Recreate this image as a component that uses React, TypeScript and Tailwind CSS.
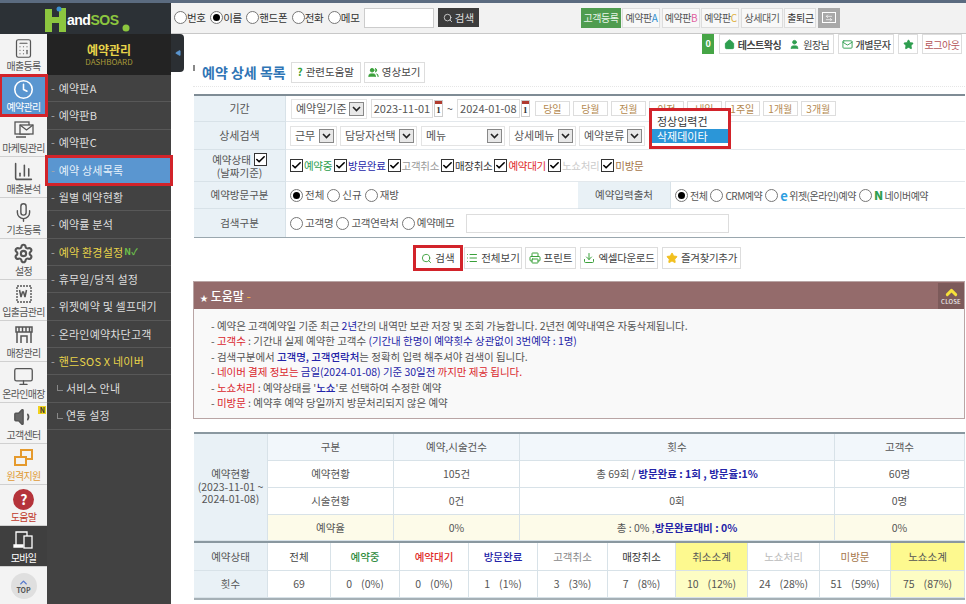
import React from "react";
import { Search, List, Printer, Download, Star, Users, House, User, Mail, Calculator, Clock, ChartColumn, Mic, Settings, Monitor, Volume1, Check, ChevronUp, Triangle, ArrowLeftRight } from "lucide-react";

const Radio = ({ on = false }: { on?: boolean }) => (
  <span className="inline-flex h-[13px] w-[13px] shrink-0 items-center justify-center rounded-full border border-[#777] bg-white">
    {on && <span className="h-[7px] w-[7px] rounded-full bg-black" />}
  </span>
);

const Box = () => (
  <span className="inline-flex h-[13px] w-[13px] shrink-0 items-center justify-center border border-[#333] bg-white">
    <Check size={11} strokeWidth={3.5} className="text-black" />
  </span>
);

const Sel = ({ text, w }: { text: string; w: string }) => (
  <span className={`${w} flex h-[20px] shrink-0 items-center justify-between whitespace-nowrap border border-[#e4e4e4] bg-white pl-[4px] pr-[2px] text-[11px]`}>
    <span>{text}</span>
    <span className="flex h-[14px] w-[15px] shrink-0 items-center justify-center border border-[#888] bg-[#e8e8e8]">
      <svg width="9" height="6" viewBox="0 0 9 6"><path d="M1 1l3.5 3.5L8 1" fill="none" stroke="#222" strokeWidth="1.6" /></svg>
    </span>
  </span>
);

const Cal = () => (
  <span className="flex h-[17px] w-[9px] shrink-0 flex-col border border-[#ccc] bg-white">
    <span className="h-[4px] bg-[#b03a2e]" />
    <span className="flex-1 text-center font-['Liberation_Serif',serif] text-[9px] font-bold leading-[12px] text-[#333]">1</span>
  </span>
);

const DateBtn = ({ t }: { t: string }) => (
  <span className="flex h-[15px] w-[35px] shrink-0 items-center justify-center border border-[#ddd] bg-white text-[10px] text-[#b4894f]">{t}</span>
);

const Btn = ({ children, cls = "" }: { children: React.ReactNode; cls?: string }) => (
  <span className={`flex shrink-0 items-center justify-center gap-[3px] whitespace-nowrap border border-[#ddd] bg-white ${cls}`}>{children}</span>
);

const railIcon = "text-[#555]";
const rail: { t: string; icon: React.ReactNode; cls?: string }[] = [
  { t: "매출등록", icon: <Calculator size={21} strokeWidth={1.4} className={railIcon} /> },
  { t: "예약관리", icon: <Clock size={21} strokeWidth={1.8} className="text-white" />, cls: "bg-[#5a96d0] text-white outline outline-[3px] -outline-offset-2 outline-[#d2232a]" },
  { t: "마케팅관리", icon: <svg width="22" height="20" viewBox="0 0 22 20" fill="none" stroke="#555" strokeWidth="1.3"><rect x="2" y="2" width="14" height="12" /><rect x="7" y="5" width="13" height="9" fill="#f3f3f3" /><path d="M7 5l6.500 5L20 5M3 17h10" /></svg> },
  { t: "매출분석", icon: <ChartColumn size={21} strokeWidth={1.8} className={railIcon} /> },
  { t: "기초등록", icon: <Mic size={21} strokeWidth={1.6} className={railIcon} /> },
  { t: "설정", icon: <Settings size={21} strokeWidth={2.4} className={railIcon} /> },
  { t: "입출금관리", icon: <svg width="20" height="20" viewBox="0 0 20 20" fill="none" stroke="#555" strokeWidth="1.4"><path d="M3 2h14v16H3z" strokeDasharray="2 1" /><path d="M5.500 6l1.500 7 1.500-5h1l1.500 5 1.500-7" strokeWidth="1.500" /></svg> },
  { t: "매장관리", icon: <svg width="20" height="20" viewBox="0 0 20 20" fill="none" stroke="#555" strokeWidth="1.500"><path d="M2 2h16v5H2zM5 2v5M8.500 2v5M12 2v5M15.500 2v5M3 7v11M17 7v11M7 18v-7h6v7" /></svg> },
  { t: "온라인매장", icon: <Monitor size={21} strokeWidth={1.5} className={railIcon} /> },
  { t: "고객센터", icon: <Volume1 size={22} strokeWidth={1.6} fill="#666" className={railIcon} /> },
  { t: "원격지원", cls: "text-[#e09a35]", icon: <svg width="21" height="21" viewBox="0 0 21 21" fill="none" stroke="#e59a2d" strokeWidth="2"><rect x="8" y="2" width="11" height="9" /><rect x="2" y="9" width="11" height="8" fill="#f3f3f3" /></svg> },
  { t: "도움말", cls: "text-[#c0392b]", icon: <span className="flex h-[21px] w-[21px] items-center justify-center rounded-full bg-[#b5333a] text-[14px] font-bold text-white">?</span> },
  { t: "모바일", cls: "bg-[#3f3f3f] text-white", icon: <svg width="21" height="20" viewBox="0 0 21 20" fill="none" stroke="#fff" strokeWidth="1.300"><path d="M3 15V2h11v4" /><rect x="11" y="6" width="8" height="12" /><path d="M1 15h9v2H1z" fill="#fff" /></svg> },
];

const menu: { t: string; cls?: string; sub?: boolean }[] = [
  { t: "예약판A" }, { t: "예약판B" }, { t: "예약판C" },
  { t: "예약 상세목록", cls: "active" },
  { t: "월별 예약현황" }, { t: "예약률 분석" },
  { t: "예약 환경설정", cls: "yellow" },
  { t: "휴무일/당직 설정" }, { t: "위젯예약 및 셀프대기" }, { t: "온라인예약차단고객" },
  { t: "핸드SOS X 네이버", cls: "yellow" },
  { t: "서비스 안내", sub: true }, { t: "연동 설정", sub: true },
];

const Label = ({ children, cls = "" }: { children: React.ReactNode; cls?: string }) => (
  <div className={`flex items-center justify-center border-b border-r border-[#d8e2e8] bg-[#e9f1f6] text-center ${cls}`}>{children}</div>
);

const SC = ({ children, cls = "" }: { children?: React.ReactNode; cls?: string }) => (
  <div className={`flex items-center justify-center border-b border-r border-[#d8e2e8] ${cls}`}>{children}</div>
);

const statusHead: [string, string][] = [
  ["전체", "text-[#444]"], ["예약중", "text-[#2e8b3d] font-medium"], ["예약대기", "text-[#e02b2b] font-medium"], ["방문완료", "text-[#2424a8] font-medium"],
  ["고객취소", "text-[#888]"], ["매장취소", "text-[#333]"], ["취소소계", "bg-[#fdf98f]"], ["노쇼처리", "text-[#bbb]"], ["미방문", "text-[#a5764a]"], ["노쇼소계", "bg-[#fdf98f]"],
];
const statusVal: [string, string, boolean][] = [
  ["69", "", false], ["0", "(0%)", false], ["00", "(0%)", false], ["1", "(1%)", false], ["3", "(3%)", false],
  ["7", "(8%)", false], ["10", "(12%)", true], ["24", "(28%)", false], ["51", "(59%)", false], ["75", "(87%)", true],
];

export default function App() {
  return (
    <div className="relative flex h-[604px] w-[966px] flex-col overflow-hidden bg-white font-['Noto_Sans_CJK_KR','Noto_Sans',sans-serif] text-[10.500px] text-[#555]">
      <div className="h-[3px] shrink-0 bg-[#5b6b80]" />
      <div className="flex min-h-0 flex-1">
        {/* left */}
        <aside className="flex w-[171px] shrink-0 flex-col">
          <div className="flex h-[31px] shrink-0 items-center bg-[#2c3136] pl-[45px]">
            <svg width="22" height="26" viewBox="0 0 22 26" className="shrink-0"><path d="M0 3h7v8h7V2h7v24h-7V17H7v9H0z" fill="#8cc63f" /><circle cx="14" cy="3" r="2.500" fill="#3b8fd0" /></svg>
            <span className="mt-[3px] font-['Liberation_Sans',sans-serif] text-[14px] font-bold leading-none tracking-[-0.5px] text-white">and</span>
            <span className="mt-[3px] font-['Liberation_Sans',sans-serif] text-[14px] font-bold leading-none tracking-[-0.4px] text-[#8cc63f]">SOS</span>
            <svg width="9" height="8" viewBox="0 0 9 8" className="ml-[2px] mt-[18px] shrink-0"><circle cx="5" cy="4" r="3.500" fill="#8cc63f" /></svg>
          </div>
          <div className="flex min-h-0 flex-1">
            <nav className="flex w-[47px] shrink-0 flex-col bg-[#f3f3f3]">
              {rail.map((r) => (
                <div key={r.t} className={`relative z-10 flex h-[41px] shrink-0 flex-col items-center justify-center overflow-visible whitespace-nowrap border-b border-[#d0d0d0] text-[10px] leading-[12px] tracking-[-0.7px] ${r.cls ?? "text-[#555]"}`}>
                  <span className="flex h-[24px] items-center">{r.icon}</span>
                  <span>{r.t}</span>
                  {r.t === "고객센터" && <span className="absolute right-[1px] top-[3px] flex h-[8px] w-[8px] items-center justify-center bg-[#f2d21c] text-[7px] font-bold leading-none text-[#333]">N</span>}
                </div>
              ))}
              <div className="flex flex-1 items-center justify-center">
                <div className="flex h-[26px] w-[26px] flex-col items-center justify-center rounded-full bg-[#dfdfdf] text-[7px] font-bold leading-[8px] text-[#555]">
                  <ChevronUp size={11} strokeWidth={3} className="-mb-[2px] text-[#5577cc]" />
                  TOP
                </div>
              </div>
            </nav>
            <div className="flex w-[124px] shrink-0 flex-col bg-[#424242]">
              <div className="flex h-[41px] shrink-0 flex-col items-center justify-center bg-[#232323]">
                <span className="text-[12px] font-bold leading-[15px] text-[#e8d44a]">예약관리</span>
                <span className="text-[8px] leading-[10px] text-[#a89a3a]">DASHBOARD</span>
              </div>
              {menu.map((m) => (
                <div
                  key={m.t}
                  className={`flex h-[27.3px] shrink-0 items-center whitespace-nowrap border-b border-[#585858] text-[11px] tracking-[0.2px] ${
                    m.cls === "active"
                      ? "relative z-10 bg-[#5a96d0] pl-[4px] text-[#e8f2fa] outline outline-[3px] -outline-offset-1 outline-[#d2232a]"
                      : m.cls === "yellow"
                        ? "pl-[4px] text-[#e8d44a]"
                        : m.sub
                          ? "pl-[10px] text-[#ddd]"
                          : "pl-[4px] text-[#ddd]"
                  }`}
                >
                  {m.sub ? <span className="mr-[3px] h-[6px] w-[6px] border-b border-l border-[#888]" /> : <span className="mr-[1px] text-[#aaa]">-&nbsp;</span>}
                  {m.t}
                  {m.t === "예약 환경설정" && <span className="ml-[1px] text-[9px] font-bold leading-none text-[#6cc04a]">N✓</span>}
                </div>
              ))}
            </div>
          </div>
        </aside>

        {/* main */}
        <main className="relative flex min-w-0 flex-1 flex-col">
          <div className="flex h-[31px] shrink-0 items-center border-b border-[#c8c8c8] bg-[#f2f2f2] pb-[1px] pl-[3px] text-[#333]">
            {["번호", "이름", "핸드폰", "전화", "메모"].map((t, i) => (
              <span key={t} className="mr-[4.400px] flex items-center whitespace-nowrap tracking-[-0.3px]">
                <Radio on={i === 1} />
                {t}
              </span>
            ))}
            <span className="h-[20px] w-[70px] border border-[#ccc] bg-white" />
            <span className="ml-[4px] flex h-[19px] w-[41px] items-center justify-center gap-[2px] bg-[#3c3c3c] text-[#ddd]">
              <Search size={10} />검색
            </span>
            <div className="ml-[102px] flex items-center gap-[1.500px] text-[10px] tracking-[-0.4px] text-[#555]">
              <span className="flex h-[20px] w-[40px] items-center justify-center bg-[#4f9c4f] text-[#e8f5e8]">고객등록</span>
              <span className="flex h-[20px] w-[38px] items-center justify-center border border-[#ddd] bg-[#f8f8f8]">예약판<b className="font-normal text-[#2f8fd0]">A</b></span>
              <span className="flex h-[20px] w-[38px] items-center justify-center border border-[#ddd] bg-[#f8f8f8]">예약판<b className="font-normal text-[#e060a0]">B</b></span>
              <span className="flex h-[20px] w-[38px] items-center justify-center border border-[#ddd] bg-[#f8f8f8]">예약판<b className="font-normal text-[#e0b040]">C</b></span>
              <span className="flex h-[20px] w-[42px] items-center justify-center border border-[#ddd] bg-[#f8f8f8]">상세대기</span>
              <span className="flex h-[20px] w-[32px] items-center justify-center border border-[#ddd] bg-[#f8f8f8] text-[#333]">출퇴근</span>
              <span className="flex h-[20px] w-[22px] items-center justify-center bg-[#a9a9a9]">
                <span className="flex h-[11px] w-[14px] items-center justify-center border border-white"><ArrowLeftRight size={8} className="text-white" /></span>
              </span>
            </div>
          </div>

          <div className="flex h-[20px] shrink-0 items-stretch justify-end gap-[4px] pr-[4px] text-[10px] tracking-[-0.5px] text-[#444]">
            <span className="mr-[1px] flex w-[12px] items-center justify-center bg-[#46a546] text-[9px] font-bold text-white">0</span>
            <Btn cls="w-[115px] font-bold">
              <House size={11} fill="#2e9e4f" className="text-[#2e9e4f]" />테스트왁싱
              <User size={11} fill="#2e9e4f" className="ml-[5px] text-[#2e9e4f]" /><span className="font-normal">원장님</span>
            </Btn>
            <Btn cls="w-[56px] font-medium"><Mail size={11} className="text-[#2e9e4f]" />개별문자</Btn>
            <Btn cls="w-[20px]"><Star size={11} fill="#2e9e4f" className="text-[#2e9e4f]" /></Btn>
            <Btn cls="w-[40px]"><span className="text-[#b5555a]">로그아웃</span></Btn>
          </div>

          <div className="ml-[22px] mr-[1px] mt-[8px] flex h-[25px] shrink-0 items-center border-b border-dotted border-[#e6e6e6] pb-[4px] text-[#444]">
            <span className="mb-[8px] mr-[7px] h-[6px] w-[2px] bg-[#888]" />
            <span className="mr-[4px] whitespace-nowrap text-[14px] font-bold leading-none text-[#2f75b5]">예약 상세 목록</span>
            <Btn cls="ml-[1px] h-[21px] w-[70px]"><span className="font-bold text-[#3aa03a]">?</span>관련도움말</Btn>
            <Btn cls="ml-[3px] h-[21px] w-[61px]"><Users size={11} fill="#3aa03a" className="text-[#3aa03a]" />영상보기</Btn>
          </div>

          {/* filter */}
          <div className="ml-[23px] mr-[1px] mt-[7px] grid shrink-0 grid-cols-[92px_292px_93px_1fr] border-b border-t-2 border-b-[#9aa7ae] border-t-[#7f8c95]">
            <Label cls="h-[26px] text-[11px]">기간</Label>
            <div className="col-span-3 flex items-center border-b border-[#e3e8ec] pl-[5px]">
              <Sel text="예약일기준" w="w-[76px]" />
              <span className="ml-[4px] flex h-[19px] w-[62px] items-center justify-center border border-[#ddd] text-[11px]">2023-11-01</span>
              <span className="ml-[1px]"><Cal /></span>
              <span className="mx-[4px]">~</span>
              <span className="flex h-[19px] w-[63px] items-center justify-center border border-[#ddd] text-[11px]">2024-01-08</span>
              <span className="ml-[1px]"><Cal /></span>
              <span className="ml-[5px] flex gap-[3px]">
                {["당일", "당월", "전월", "이전", "내일", "1주일", "1개월", "3개월"].map((t) => <DateBtn key={t} t={t} />)}
              </span>
            </div>

            <Label cls="h-[28px] text-[11px]">상세검색</Label>
            <div className="col-span-3 flex items-center gap-[3px] border-b border-[#e3e8ec] pl-[4px]">
              <Sel text="근무" w="w-[47px]" />
              <Sel text="담당자선택" w="w-[77px]" />
              <Sel text="메뉴" w="w-[84px] ml-[1px]" />
              <Sel text="상세메뉴" w="w-[67px] ml-[1px]" />
              <Sel text="예약분류" w="w-[66px]" />
            </div>

            <Label cls="h-[32px] flex-col leading-[13px]">
              <span className="flex items-center gap-[3px]">예약상태 <Box /></span>
              <span>(날짜기준)</span>
            </Label>
            <div className="col-span-3 flex items-center gap-[1px] border-b border-[#e3e8ec] pl-[4px] tracking-[-0.3px]">
              <Box /><span className="mr-[1px] text-[#2e9e4f]">예약중</span>
              <Box /><span className="mr-[1px] text-[#2424a8]">방문완료</span>
              <Box /><span className="mr-[1px] text-[#999]">고객취소</span>
              <Box /><span className="mr-[1px] text-[#333]">매장취소</span>
              <Box /><span className="mr-[1px] text-[#e02b2b]">예약대기</span>
              <Box /><span className="mr-[1px] text-[#ccc]">노쇼처리</span>
              <Box /><span className="text-[#a5764a]">미방문</span>
            </div>

            <Label cls="h-[27px]">예약방문구분</Label>
            <div className="flex items-center gap-[2px] border-b border-[#e3e8ec] pl-[4px]">
              <Radio on /><span className="mr-[1px]">전체</span><Radio /><span className="mr-[1px]">신규</span><Radio /><span>재방</span>
            </div>
            <Label cls="h-[27px]">예약입력출처</Label>
            <div className="flex items-center gap-[2px] whitespace-nowrap border-b border-[#e3e8ec] pl-[4px] text-[10px] tracking-[-0.5px]">
              <Radio on /><span className="mr-[1px]">전체</span>
              <Radio /><span className="mr-[1px]">CRM예약</span>
              <Radio /><span className="text-[13px] font-bold leading-none text-[#2f9fe0]">e</span><span className="mr-[1px]">위젯(온라인)예약</span>
              <Radio /><span className="text-[12px] font-black leading-none text-[#2e9e4f]">N</span><span>네이버예약</span>
            </div>

            <Label cls="h-[28px] border-b-0">검색구분</Label>
            <div className="col-span-3 flex items-center gap-[2px] pl-[4px] tracking-[-0.2px]">
              <Radio /><span className="mr-[1px]">고객명</span><Radio /><span className="mr-[1px]">고객연락처</span><Radio /><span>예약메모</span>
              <span className="ml-[9px] h-[19px] w-[263px] border border-[#ddd]" />
            </div>
          </div>

          {/* actions */}
          <div className="ml-[23px] mt-[9px] flex h-[22px] shrink-0 gap-[3px] pl-[221px] text-[#444]">
            <Btn cls="h-[22px] w-[46px] outline outline-[3px] -outline-offset-1 outline-[#d2232a]"><Search size={11} className="text-[#3aa03a]" />검색</Btn>
            <Btn cls="h-[22px] w-[58px]"><List size={12} className="text-[#3aa03a]" />전체보기</Btn>
            <Btn cls="h-[22px] w-[51px]"><Printer size={12} className="text-[#3aa03a]" />프린트</Btn>
            <Btn cls="ml-[1px] h-[22px] w-[78px] tracking-[-0.3px]"><Download size={12} className="text-[#3aa03a]" />엑셀다운로드</Btn>
            <Btn cls="ml-[1px] h-[22px] w-[79px] tracking-[-0.3px]"><Star size={12} fill="#f2c01e" className="text-[#f2c01e]" />즐겨찾기추가</Btn>
          </div>

          {/* help */}
          <div className="ml-[22px] mr-[1px] mt-[12px] h-[138px] shrink-0 border border-[#b9a5a5] bg-[#f9f9f9]">
            <div className="flex h-[27px] items-center justify-between bg-[#946b6b] pl-[6px] text-[12px] font-medium text-white">
              <span><span className="text-[8px]">★</span> 도움말 <span className="text-[#f0b040]">-</span></span>
              <span className="flex h-[26px] w-[26px] flex-col items-center justify-center bg-[#7c5a5a] text-[6px] leading-[7px] tracking-[0.2px] text-[#eee]">
                <ChevronUp size={17} strokeWidth={4} className="-my-[3px] text-[#f5e03a]" />
                CLOSE
              </span>
            </div>
            <div className="pl-[17px] pt-[9px] leading-[15.400px] tracking-[-0.04px]">
              <p>- 예약은 고객예약일 기준 최근 <span className="text-[#2424a8]">2년</span>간의 내역만 보관 저장 및 조회 가능합니다. 2년전 예약내역은 자동삭제됩니다.</p>
              <p>- <span className="text-[#d9272e]">고객수</span> : 기간내 실제 예약한 고객수 <span className="text-[#2424a8]">(기간내 한명이 예약횟수 상관없이 3번예약 : 1명)</span></p>
              <p>- 검색구분에서 <span className="font-medium text-[#2424a8]">고객명, 고객연락처</span>는 정확히 입력 해주셔야 검색이 됩니다.</p>
              <p><span>- </span><span className="text-[#d9272e]">네이버 결제 정보는 </span><span className="text-[#2424a8]">금일(2024-01-08) 기준 30일전 </span><span className="text-[#d9272e]">까지만 제공 됩니다.</span></p>
              <p>- <span className="text-[#d9272e]">노쇼처리</span> : 예약상태를 &apos;<span className="font-medium text-[#2424a8]">노쇼</span>&apos;로 선택하여 수정한 예약</p>
              <p>- <span className="text-[#d9272e]">미방문</span> : 예약후 예약 당일까지 방문처리되지 않은 예약</p>
            </div>
          </div>

          {/* stats */}
          <div className="ml-[23px] mr-[1px] mt-[13px] flex shrink-0 border-b-2 border-t-2 border-b-[#8a98a0] border-t-[#8a98a0]">
            <Label cls="w-[74px] shrink-0 flex-col leading-[12.500px]">
              <span>예약현황</span>
              <span>(2023-11-01 ~</span>
              <span>2024-01-08)</span>
            </Label>
            <div className="grid flex-1 grid-cols-[126px_126px_315px_130px] grid-rows-[27px_27px_27px_26px]">
              <SC cls="bg-[#f2f7fb]">구분</SC><SC cls="bg-[#f2f7fb]">예약,시술건수</SC><SC cls="bg-[#f2f7fb]">횟수</SC><SC cls="bg-[#f2f7fb]">고객수</SC>
              <SC>예약현황</SC><SC>105건</SC><SC>총 69회 /&nbsp;<b className="text-[#2424a8]">방문완료 : 1회 , 방문율:1%</b></SC><SC>60명</SC>
              <SC>시술현황</SC><SC>0건</SC><SC>0회</SC><SC>0명</SC>
              <SC cls="bg-[#fdfbe9]">예약율</SC><SC cls="bg-[#fdfbe9]">0%</SC><SC cls="bg-[#fdfbe9]">총 : 0% ,<b className="text-[#2424a8]">방문완료대비 : 0%</b></SC><SC cls="bg-[#fdfbe9]">0%</SC>
            </div>
          </div>
          <div className="ml-[23px] mr-[1px] grid shrink-0 grid-cols-[74px_63px_69px_69px_69px_70px_68px_72px_72px_71px_1fr] grid-rows-[28px_27px] border-b-2 border-b-[#a5b0b6]">
            <Label>예약상태</Label>
            {statusHead.map(([t, c]) => <SC key={t} cls={c}>{t}</SC>)}
            <Label>횟수</Label>
            {statusVal.map(([n, p, y]) => (
              <SC key={n} cls={y ? "gap-[9px] bg-[#fdfdc4]" : "gap-[9px]"}><span>{n === "00" ? "0" : n}</span>{p && <span>{p}</span>}</SC>
            ))}
          </div>

          {/* collapse tab */}
          <span className="absolute left-0 top-[31px] flex h-[38px] w-[13px] items-center justify-center rounded-r-[4px] bg-[#2b2f33]">
            <Triangle size={6} fill="#5a96d0" className="-rotate-90 text-[#5a96d0]" />
          </span>

          {/* dropdown */}
          <div className="absolute left-[478px] top-[105px] z-20 h-[41px] w-[82px] border-[3px] border-[#d2232a] bg-white text-[11px] text-[#333]">
            <div className="h-[18px] pl-[5px] pt-[3px] leading-[14px]">정상입력건</div>
            <div className="h-[14px] bg-[#2b96d8] pl-[5px] leading-[14px] text-white">삭제데이타</div>
          </div>
        </main>
      </div>
    </div>
  );
}
